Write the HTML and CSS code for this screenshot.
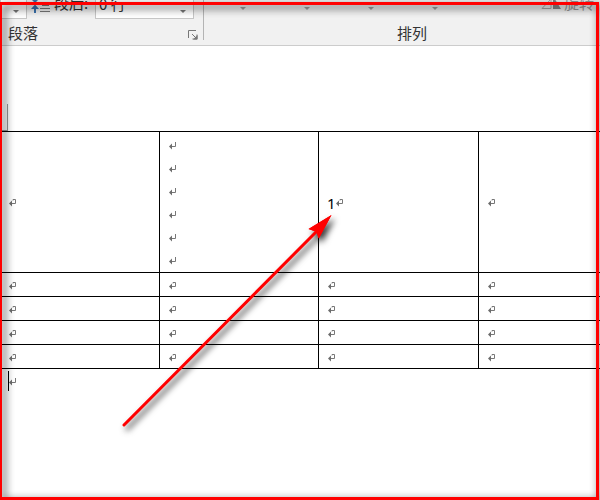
FILE: index.html
```
<!DOCTYPE html>
<html lang="zh-CN">
<head>
<meta charset="utf-8">
<title>表格</title>
<link rel="stylesheet" href="styles.css">
</head>
<body>
<svg class="defs" aria-hidden="true">
  <symbol id="para" viewBox="0 0 8 8"><path d="M4 1.500V.5h2.500v4H1" fill="none" stroke="#777" stroke-width="1"/><path d="M0 4.500 3 1.500v6z" fill="#6c6c6c"/></symbol>
  <symbol id="line" viewBox="0 0 8 8"><path d="M6.500 0v4.500H1" fill="none" stroke="#777" stroke-width="1"/><path d="M0 4.500 3 1.500v6z" fill="#6c6c6c"/></symbol>
  <symbol id="down" viewBox="0 0 6 3"><path d="M0 0h6L3 3z" fill="currentColor"/></symbol>
</svg>
<header class="ribbon">
  <section class="group paragraph">
    <div class="tools">
      <button class="drop" aria-label="段前选项"><svg><use href="#down"/></svg></button>
      <svg class="spacing" viewBox="0 0 20 16"><path d="M4 0v4M4 10v6" stroke="#3a72ae" stroke-width="2"/><path d="M0 2h8L4 6zM0 12l4-4.500L8 12z" fill="#3a72ae"/><path d="M11 8.500h7M9 11.500h10M9 14.500h10" stroke="#777"/></svg>
      <label for="after">段后:</label>
      <div class="combo">
        <select id="after"><option>0 行</option></select>
        <svg><use href="#down"/></svg>
      </div>
    </div>
    <div class="caption"><span>段落</span>
      <button class="launcher" aria-label="段落设置"><svg viewBox="0 0 10 10"><path d="M.5 8V.5H8M4 4l4 4M9 4.500V9H4.500" fill="none" stroke="#777"/><path d="M9.500 5v4.500H5z" fill="#777"/></svg></button>
    </div>
  </section>
  <section class="group arrange">
    <div class="tools">
      <button class="menu" aria-label="位置"><svg><use href="#down"/></svg></button>
      <button class="menu" aria-label="环绕文字"><svg><use href="#down"/></svg></button>
      <button class="menu" aria-label="上移一层"><svg><use href="#down"/></svg></button>
      <button class="menu" aria-label="下移一层"><svg><use href="#down"/></svg></button>
      <button class="rotate"><svg viewBox="0 0 20 16"><path d="M1 13.500 10 4v9.500z" fill="none" stroke="#aaa"/><path d="M12 1v13h8z" fill="#888"/></svg>旋转</button>
    </div>
    <div class="caption"><span>排列</span></div>
  </section>
</header>
<main>
  <div class="margin"><span class="corner"></span></div>
  <table>
    <tr class="tall">
      <td><svg class="mark"><use href="#para"/></svg></td>
      <td><div class="lines">
        <svg class="mark"><use href="#line"/></svg>
        <svg class="mark"><use href="#line"/></svg>
        <svg class="mark"><use href="#line"/></svg>
        <svg class="mark"><use href="#line"/></svg>
        <svg class="mark"><use href="#line"/></svg>
        <svg class="mark"><use href="#line"/></svg>
      </div></td>
      <td><div class="value">1<svg class="mark"><use href="#para"/></svg></div></td>
      <td><svg class="mark"><use href="#para"/></svg></td>
    </tr>
    <tr><td><svg class="mark"><use href="#para"/></svg></td><td><svg class="mark"><use href="#para"/></svg></td><td><svg class="mark"><use href="#para"/></svg></td><td><svg class="mark"><use href="#para"/></svg></td></tr>
    <tr><td><svg class="mark"><use href="#para"/></svg></td><td><svg class="mark"><use href="#para"/></svg></td><td><svg class="mark"><use href="#para"/></svg></td><td><svg class="mark"><use href="#para"/></svg></td></tr>
    <tr><td><svg class="mark"><use href="#para"/></svg></td><td><svg class="mark"><use href="#para"/></svg></td><td><svg class="mark"><use href="#para"/></svg></td><td><svg class="mark"><use href="#para"/></svg></td></tr>
    <tr><td><svg class="mark"><use href="#para"/></svg></td><td><svg class="mark"><use href="#para"/></svg></td><td><svg class="mark"><use href="#para"/></svg></td><td><svg class="mark"><use href="#para"/></svg></td></tr>
  </table>
  <div class="cursor-line"><svg class="mark"><use href="#line"/></svg></div>
</main>
<svg class="arrow" viewBox="0 0 230 230" aria-hidden="true"><path d="M14 219 206 26" stroke="red" stroke-width="3" stroke-linecap="round"/><path d="M221.500 9 198.500 23l8 3 2 6.500z" fill="red"/><path d="M221.500 9 198.500 23l7.500 2.500 3 7z" fill="red"/></svg>
<div class="frame"></div>
</body>
</html>
```
FILE: styles.css
```
* { box-sizing: border-box; }

body {
  position: relative;
  min-height: 100vh;
  margin: 0;
  overflow: hidden;
  background: #fff;
  color: #333;
  font: 15px/20px "Noto Sans CJK SC", sans-serif;
}

main { overflow: hidden; }
svg { display: block; flex: none; }
.defs { display: none; }

button {
  display: flex;
  align-items: center;
  padding: 0;
  border: 0;
  background: none;
  color: #777;
  font: inherit;
}

.ribbon {
  display: flex;
  height: 46px;
  overflow: hidden;
  border-bottom: 1px solid #ccc;
  background: #f1f1f1;
}

.group { display: flex; flex-direction: column; }
.paragraph { width: 204px; height: 40px; border-right: 1px solid #b4b4b4; }
.arrange { flex: 1; }

.tools {
  display: flex;
  align-items: center;
  height: 28px;
  margin-top: -9px;
}

.drop {
  justify-content: flex-end;
  width: 27px;
  height: 28px;
  padding: 12px 7px 0 0;
  border: 1px solid #c6c6c6;
  background: #fff;
}

.drop svg, .combo svg, .menu svg { width: 6px; height: 3px; }
.spacing { width: 20px; height: 16px; margin: 0 3px 0 4px; }
.tools label { width: 41px; white-space: nowrap; line-height: 28px; padding-bottom: 4px; }
.combo { position: relative; width: 99px; height: 28px; }

.combo select {
  appearance: none;
  width: 100%;
  height: 100%;
  padding: 0 0 3px 3px;
  border: 1px solid #c6c6c6;
  border-radius: 0;
  background: #fff;
  color: #333;
  font: inherit;
}

.combo svg { position: absolute; right: 8px; bottom: 6px; color: #777; }

.caption {
  display: flex;
  align-items: center;
  justify-content: space-between;
  height: 20px;
  margin-top: 4px;
  padding: 0 5px 0 8px;
}

.launcher { margin-top: 4px; }
.launcher svg { width: 10px; height: 10px; }
.arrange .tools { gap: 58px; padding-left: 36px; }
.arrange .caption { justify-content: center; padding: 0 0 0 20px; }
.menu { padding-top: 6px; color: #a0a0a0; }
.rotate { margin: 0 6px 0 auto; padding-bottom: 4px; gap: 3px; color: #999; }
.rotate svg { width: 20px; height: 16px; }

.margin { display: flex; align-items: flex-end; height: 85px; }

.corner {
  width: 8px;
  height: 27px;
  border: solid #999;
  border-width: 0 1px 1px 0;
}

table {
  width: calc(100% + 39px);
  margin-left: -1px;
  border-collapse: collapse;
  table-layout: fixed;
}

td {
  height: 24px;
  padding: 2px 0 0 9px;
  border: 1px solid #000;
}

.tall td { height: 141px; }
.mark { width: 8px; height: 8px; }
.lines { display: grid; grid-template-rows: repeat(6, 1fr); align-items: center; height: 138px; }
.value { display: flex; align-items: center; color: #000; font-family: "Noto Sans", sans-serif; }
.tall td:nth-child(3) { padding-left: 8px; }

.cursor-line {
  display: flex;
  align-items: center;
  height: 20px;
  margin: 2px 0 0 8px;
  padding-top: 2px;
  border-left: 1px solid #000;
}

.arrow {
  position: absolute;
  top: 206px;
  left: 110px;
  width: 230px;
  height: 230px;
  filter: drop-shadow(3px 4px 3px rgba(0, 0, 0, .8));
}

.frame {
  position: absolute;
  inset: 2px 1px 0 -1px;
  border: 3px solid red;
  filter: drop-shadow(3px 3px 4px rgba(0, 0, 0, .9));
  pointer-events: none;
}
```
